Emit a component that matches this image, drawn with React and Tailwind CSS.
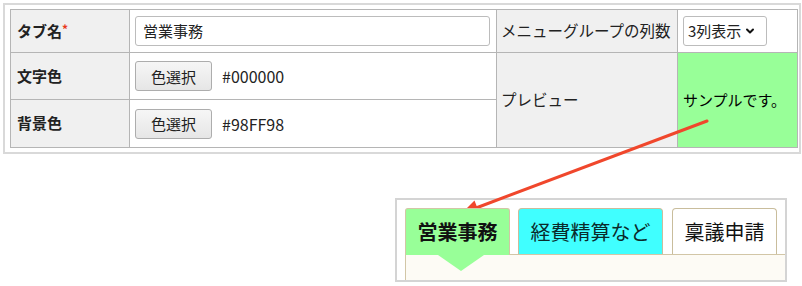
import { ChevronDown } from 'lucide-react';

const font = { fontFamily: '"Noto Sans CJK JP", "Noto Sans", sans-serif' };

function ColorButton({ value }) {
  return (
    <div className="flex items-center">
      <button className="w-[77px] h-[30px] border border-[#adadad] rounded-[3px] bg-gradient-to-b from-[#f6f6f6] to-[#e6e6e6] text-[15px] leading-none text-[#222]">
        色選択
      </button>
      <span className="ml-[10px] text-[16px] text-[#222]">{value}</span>
    </div>
  );
}

export default function App() {
  return (
    <div className="relative w-[802px] h-[286px] bg-white overflow-hidden text-[#222]" style={font}>
      {/* settings table */}
      <div className="ml-[3px] mt-[3px] w-[798px] border-2 border-[#d9d9d9] pl-[5px] pt-[4px] pb-[4px]">
        <table className="table-fixed border-collapse w-[787px]">
          <colgroup>
            <col className="w-[119px]" />
            <col className="w-[367px]" />
            <col className="w-[181px]" />
            <col className="w-[120px]" />
          </colgroup>
          <tbody>
            <tr className="h-[43px]">
              <td className="border border-[#b5b5b5] bg-[#f0f0f0] px-[6px] text-[15px] font-bold">
                タブ名<span className="text-[#e8391d] text-[12px] align-top">*</span>
              </td>
              <td className="border border-[#b5b5b5] pl-[5px] pr-[6px]">
                <div className="h-[30px] border border-[#bcbcbc] rounded-[3px] flex items-center px-[7px] text-[15px]">
                  営業事務
                </div>
              </td>
              <td className="border border-[#b5b5b5] bg-[#f0f0f0] px-[4px] text-[15.5px] whitespace-nowrap">
                メニューグループの列数
              </td>
              <td className="border border-[#b5b5b5] px-[5px]">
                <div className="w-[84px] h-[30px] border border-[#bcbcbc] rounded-[3px] flex items-center gap-[3px] pl-[4px] text-[15px]">
                  <span>3列表示</span>
                  <ChevronDown size={12} strokeWidth={4} className="text-[#111]" />
                </div>
              </td>
            </tr>
            <tr className="h-[47px]">
              <td className="border border-[#b5b5b5] bg-[#f0f0f0] px-[6px] text-[15px] font-bold">文字色</td>
              <td className="border border-[#b5b5b5] pl-[5px]">
                <ColorButton value="#000000" />
              </td>
              <td rowSpan={2} className="border border-[#b5b5b5] bg-[#f0f0f0] px-[4px] text-[15.5px]">
                プレビュー
              </td>
              <td rowSpan={2} className="border border-[#b5b5b5] bg-[#98ff98] px-[5px] text-[15px] text-black whitespace-nowrap">
                サンプルです。
              </td>
            </tr>
            <tr className="h-[48px]">
              <td className="border border-[#b5b5b5] bg-[#f0f0f0] px-[6px] text-[15px] font-bold">背景色</td>
              <td className="border border-[#b5b5b5] pl-[5px]">
                <ColorButton value="#98FF98" />
              </td>
            </tr>
          </tbody>
        </table>
      </div>

      {/* tab preview */}
      <div className="ml-[395px] mt-[44px] w-[392px] h-[84px] border-2 border-[#d4d4d4] pl-[8px] pt-[8px] flex flex-col overflow-hidden">
        <div className="flex gap-[8px] items-end">
          <div className="relative z-10 -mb-px w-[105px] h-[47px] bg-[#98ff98] border border-b-0 border-[#d2c6a6] rounded-t-[3px] flex items-center justify-center text-[20px] font-bold text-[#111] pb-[1px]">
            営業事務
            <div className="absolute left-[32px] top-full w-0 h-0 border-l-[23px] border-r-[23px] border-t-[16px] border-l-transparent border-r-transparent border-t-[#98ff98]" />
          </div>
          <div className="w-[145px] h-[46px] bg-[#40ffff] border border-b-0 border-[#c9bd9c] rounded-t-[4px] flex items-center justify-center text-[20px] text-[#0b2b2b]">
            経費精算など
          </div>
          <div className="ml-[1px] w-[105px] h-[46px] bg-white border border-b-0 border-[#c9bd9c] rounded-t-[4px] flex items-center justify-center text-[20px] text-[#111]">
            稟議申請
          </div>
        </div>
        <div className="flex-1 bg-[#fdfbf5] border-l border-t border-[#d2c6a6]" />
      </div>

      {/* annotation arrow */}
      <svg className="absolute left-0 top-0 pointer-events-none" width="802" height="286" viewBox="0 0 802 286">
        <line x1="707" y1="121" x2="476" y2="208" stroke="#f0472c" strokeWidth="3" strokeLinecap="round" />
        <polygon points="462,213 479.5,213.5 474.5,200.5" fill="#f0472c" />
      </svg>
    </div>
  );
}
